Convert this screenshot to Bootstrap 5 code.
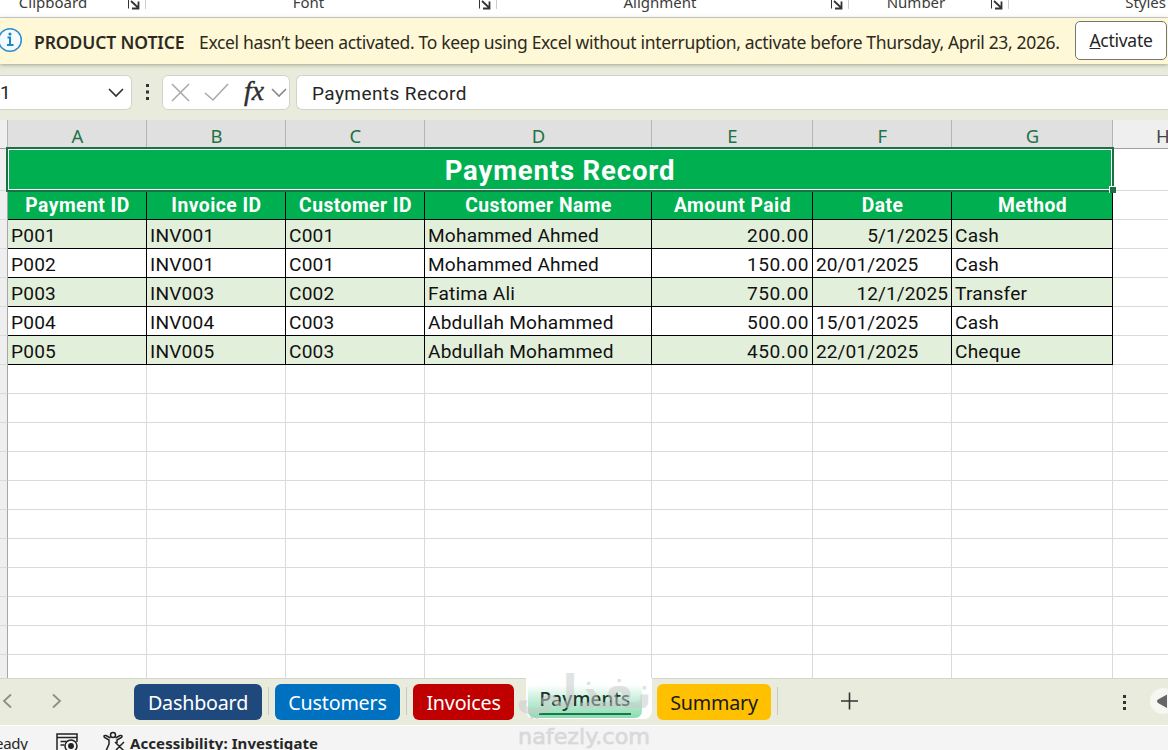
<!DOCTYPE html>
<html lang="en">
<head>
<meta charset="utf-8">
<meta name="viewport" content="width=device-width, initial-scale=1">
<title>Payments Record</title>
<link rel="stylesheet" href="https://cdn.jsdelivr.net/npm/bootstrap@5.3.0/dist/css/bootstrap.min.css">
<style>
body{font-family:"Noto Sans",sans-serif;color:#262626;height:750px;overflow:hidden;background:#fff;white-space:nowrap}
svg{display:block;flex:none}
.ribbon{height:18px;border-bottom:1px solid #d0ced0;font-size:15px;line-height:18px;color:#3b3b3b}
.ribbon .cap-label{text-align:center;margin-top:-7px;height:24px}
.notice{height:46px;background:#fff8d6;font-size:17.5px;letter-spacing:-.34px;color:#2c2a20;box-shadow:0 1px 4px rgba(90,95,60,.5);z-index:2}
.notice b{font-weight:600;font-size:17.5px;letter-spacing:-.1px;width:165px}
.notice b,.notice span{position:relative;top:1px}
.activate{width:92px;height:39px;border:1px solid #767676;border-radius:5px;background:#fff;margin-top:-2px;font-size:17.5px;color:#262626;letter-spacing:-.28px;padding-top:1px!important}
.formula{height:56px;background:#e9ecdc;padding-top:11px}
.fbox{height:35px;background:#fff;border:1px solid #d2d4ca;border-radius:6px}
.sheet{height:558px;overflow:hidden}
.cells{table-layout:fixed;width:1252px;border-collapse:separate;border-spacing:0;font-family:Roboto,"Liberation Sans",sans-serif;font-size:19px;color:#111;line-height:28px}
.cells td,.cells th{height:29px;padding:0 3px;border-right:1px solid #dadada;border-bottom:1px solid #dadada;overflow:hidden;letter-spacing:.2px}
.cells td.rh,.cells th.rh{background:#efefef;border-right-color:#a6a6a6;padding:0}
.cells .letters th{background:#e0e0e0;border-right-color:#b5b5b5;border-bottom-color:#a0a0a0;color:#217346;font:400 18.5px/25px "Noto Sans",sans-serif;text-align:center;padding:3px 2px 0 3px}
.cells .letters th.plain{background:#efefef;color:#444}
.cells td.title{height:42px;background:#00b050;color:#fff;font-size:27.5px;font-weight:700;letter-spacing:.85px;text-align:center;padding-top:3px}
.cells th.hd{background:#00b050;color:#fff;font-weight:700;font-size:19.3px;letter-spacing:.48px;text-align:center;border-color:#000;padding:2px 2px 0 3px;line-height:26px}
.cells td.rec{border-color:#000;padding-top:3px;line-height:25px;font-size:19.1px}
.cells tr.band td.rec{background:#e2efda}
.cells td.num{text-align:right}
.cells td.amount{letter-spacing:.55px}
.cells td.day{letter-spacing:.08px}
.sel{left:6px;top:27px;width:1108px;height:45px;border:2px solid #1d7044;box-shadow:inset 0 0 0 1px #fff}
.handle{right:-4px;bottom:-3px;width:7px;height:7px;background:#1d7044;border:solid #fff;border-width:1px 0 0 1px}
.tabs{height:48px;background:#e9ecdc;border-top:1px solid #d4d6cc;border-bottom:1px solid #fff}
.sheet-tab{height:36px;border-radius:6px;color:#fff;font-size:19.7px;line-height:38px;text-align:center;letter-spacing:-.2px;margin-top:5px;flex:none}
.divide{width:1px;height:28px;background:#c9cbc0;margin-top:8px;flex:none}
.active-wrap{width:126px;height:41px;margin-top:-1px;background:#fff;border-radius:0 0 8px 8px;flex:none}
.active-tab{margin:4px 9px 0 1px;height:37px;border-radius:8px;background:linear-gradient(#fff 5%,#bdebd3 55%,#8cdcb2);border:1px solid #fff;padding-top:3px}
.active-tab span{font-size:19px;font-weight:500;letter-spacing:.15px;line-height:26px;border-bottom:2px solid #157a45;height:29px;color:#1c3327}
.status{height:25px;background:#f4f4f4;font-size:15px;line-height:34px}
.mark-over{left:505px;top:670px}
</style>
</head>
<body>
<header class="ribbon d-flex position-relative">
  <div class="cap-label" style="width:106px">Clipboard</div>
  <svg class="position-absolute top-0 start-0" width="1168" height="17" fill="none" stroke="#333">
    <defs><g id="launch"><path d="M.5 0V8.500" /><path d="M3 1l7 6.500M10.500 1.500v7H4" stroke-width="1.800"/></g></defs>
    <use href="#launch" x="128"/><use href="#launch" x="479"/><use href="#launch" x="831"/><use href="#launch" x="991"/>
    <path d="M145.500 0v9M496.500 0v9M848.500 0v9M1008.500 0v9" stroke="#ccc"/>
  </svg>
  <div class="cap-label" style="width:405px">Font</div>
  <div class="cap-label" style="width:298px">Alignment</div>
  <div class="cap-label" style="width:214px">Number</div>
  <div class="cap-label ms-auto" style="margin-right:2px">Styles</div>
</header>

<div class="notice d-flex align-items-center position-relative">
  <svg width="34" height="46" fill="none"><circle cx="10" cy="22" r="11.300" fill="#f4fafd" stroke="#2b8fcd" stroke-width="1.500"/><path d="M7.500 19.500H10V26M7 27h6.500" stroke="#1b86c9" stroke-width="2"/><circle cx="10" cy="16" r="1.600" fill="#1b86c9"/></svg>
  <b>PRODUCT NOTICE</b>
  <span>Excel hasn’t been activated. To keep using Excel without interruption, activate before Thursday, April 23, 2026.</span>
  <button class="activate ms-auto me-0 p-0 position-relative" style="right:1px"><u>A</u>ctivate</button>
</div>

<div class="formula d-flex">
  <div class="fbox d-flex align-items-center rounded-start-0 border-start-0" style="width:132px;font:19px/36px Roboto,sans-serif">1
    <svg class="ms-auto" style="margin-right:7px" width="16" height="10" fill="none" stroke="#333" stroke-width="1.700"><path d="M1 1l7 7 7-7"/></svg></div>
  <svg width="30" height="35" fill="#333"><path d="M14 9h3v3h-3zM14 15.500h3v3h-3zM14 22h3v3h-3z"/></svg>
  <div class="fbox" style="width:128px">
    <svg width="126" height="33" fill="none" stroke="#aaa" stroke-width="1.600"><path d="M9 8l17 17M26 8L9 25M42 17l8 7L65 8"/><path d="M109 13l7 7 7-7" stroke="#888"/><text x="81" y="24" fill="#2d2d2d" stroke="#2d2d2d" stroke-width=".4" font-family="Liberation Serif, serif" font-style="italic" font-size="27" textLength="20" lengthAdjust="spacingAndGlyphs">fx</text></svg></div>
  <div class="fbox flex-grow-1 border-end-0 rounded-end-0" style="margin-left:6px;padding-left:15px;font:19px/35px Roboto,sans-serif;letter-spacing:.42px">Payments Record</div>
</div>

<main class="sheet position-relative">
  <table class="cells">
    <colgroup><col style="width:8px"><col style="width:139px"><col style="width:139px"><col style="width:139px"><col style="width:227px"><col style="width:161px"><col style="width:139px"><col style="width:161px"><col style="width:139px"></colgroup>
    <tbody id="grid">
      <tr class="letters"><th class="rh plain"></th><th>A</th><th>B</th><th>C</th><th>D</th><th>E</th><th>F</th><th>G</th><th class="plain" style="text-indent:-39px">H</th></tr>
      <tr><td class="rh"></td><td class="title" colspan="7">Payments Record</td><td></td></tr>
      <tr><td class="rh"></td><th class="hd">Payment ID</th><th class="hd">Invoice ID</th><th class="hd">Customer ID</th><th class="hd">Customer Name</th><th class="hd">Amount Paid</th><th class="hd">Date</th><th class="hd">Method</th><td></td></tr>
    </tbody>
  </table>
  <div class="sel position-absolute"><div class="handle position-absolute"></div></div>
</main>

<nav class="tabs d-flex">
  <svg width="134" height="46" fill="none" stroke="#8d8f86" stroke-width="1.800"><path d="M11 15.500l-7 6.500 7 6.500M53 15.500l7 6.500-7 6.500"/></svg>
  <div class="sheet-tab" style="width:128px;background:#1f497d">Dashboard</div>
  <div class="divide" style="margin-left:6px;margin-right:6px"></div>
  <div class="sheet-tab" style="width:125px;background:#0070c0">Customers</div>
  <div class="divide" style="margin-left:6px;margin-right:6px"></div>
  <div class="sheet-tab" style="width:101px;background:#c00000">Invoices</div>
  <div class="active-wrap" style="margin-left:12px"><div class="active-tab d-flex justify-content-center"><span>Payments</span></div></div>
  <div class="sheet-tab" style="width:114px;background:#ffc000;color:#1a1a1a;margin-left:5px">Summary</div>
  <div class="divide" style="margin-left:6px"></div>
  <svg class="ms-auto" width="390" height="46"><path d="M63 22h17M71.500 13.500v17" stroke="#333" stroke-width="1.600"/><path d="M345 16h3v3h-3zM345 22h3v3h-3zM345 28h3v3h-3z" fill="#333"/><circle cx="385" cy="22" r="13" fill="#f6f6f2"/><path d="M389 15.500V29l-9-5q-2-1.800 0-3.500z" fill="#666"/></svg>
</nav>

<footer class="status d-flex">
  <span style="width:58px;margin-left:-5px;letter-spacing:-.3px">eady</span>
  <svg width="77" height="24" fill="none" stroke="#222" stroke-width="1.500"><path d="M4 24V8h20v8M4 11.500h20M7.500 15.500h7M7.500 19h4"/><circle cx="18" cy="20" r="6" fill="#f4f4f4"/><circle cx="18" cy="20" r="2.200" fill="#222"/><g transform="translate(50 0)"><circle cx="10" cy="9" r="2.500"/><path d="M7.500 12L3 9.500Q0 9 1.500 11.500L6 14v4l-3 7M12.500 12L17 9.500q3-.5 1.500 2L14 14v3M12 16l9 9M21 16l-8 8"/></g></svg>
  <b style="letter-spacing:.08px">Accessibility: Investigate</b>
</footer>

<svg class="mark-over position-absolute pe-none" width="165" height="80" fill="#c8c9cb" fill-opacity=".55">
  <text x="147" y="38" direction="rtl" font-family="DejaVu Sans, sans-serif" font-weight="700" font-size="46" textLength="136" lengthAdjust="spacingAndGlyphs">نفذلي</text>
  <text x="13" y="74" font-family="DejaVu Sans, sans-serif" font-size="21" stroke="#c8c9cb" stroke-opacity=".4" textLength="132" lengthAdjust="spacingAndGlyphs">nafezly.com</text>
</svg>

<script>
const records = [
  ["P001","INV001","C001","Mohammed Ahmed","200.00","5/1/2025","Cash"],
  ["P002","INV001","C001","Mohammed Ahmed","150.00","20/01/2025","Cash"],
  ["P003","INV003","C002","Fatima Ali","750.00","12/1/2025","Transfer"],
  ["P004","INV004","C003","Abdullah Mohammed","500.00","15/01/2025","Cash"],
  ["P005","INV005","C003","Abdullah Mohammed","450.00","22/01/2025","Cheque"]
];
const kind = (v, c) => c === 4 ? " num amount" : c === 5 ? (v.length < 10 ? " num day" : " day") : "";
const grid = document.getElementById("grid");
records.forEach((r, i) => {
  const cells = r.map((v, c) => `<td class="rec${kind(v, c)}">${v}</td>`).join("");
  grid.insertAdjacentHTML("beforeend", `<tr class="${i % 2 ? "" : "band"}"><td class="rh"></td>${cells}<td></td></tr>`);
});
for (let i = 0; i < 11; i++)
  grid.insertAdjacentHTML("beforeend", `<tr><td class="rh"></td>${"<td></td>".repeat(8)}</tr>`);
</script>
<script src="https://cdn.jsdelivr.net/npm/bootstrap@5.3.0/dist/js/bootstrap.bundle.min.js"></script>
</body>
</html>
